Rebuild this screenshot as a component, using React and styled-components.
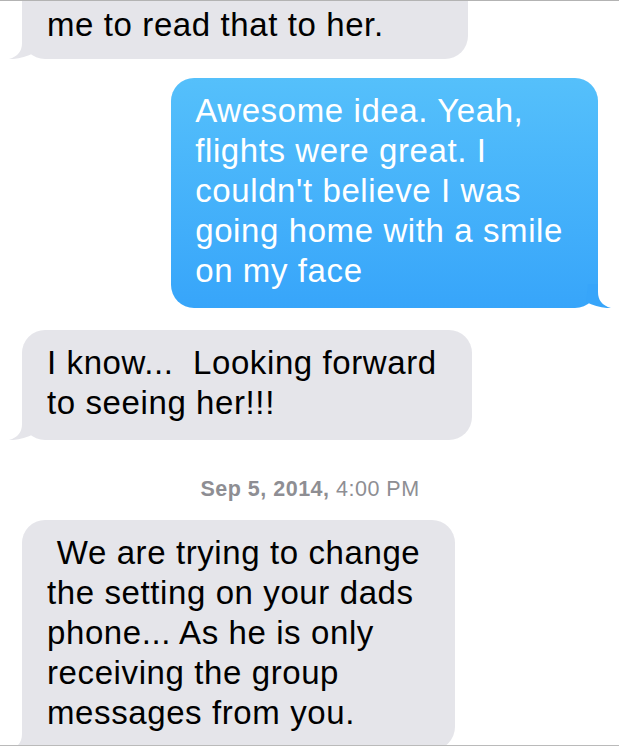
import React from "react";
import styled, { createGlobalStyle } from "styled-components";

const GlobalStyle = createGlobalStyle`
  html, body { margin: 0; padding: 0; background: #ffffff; }
  body { font-family: "Liberation Sans", Arial, Helvetica, sans-serif; }
`;

const Screen = styled.div`
  width: 619px;
  height: 746px;
  box-sizing: border-box;
  border-top: 1px solid #b3b3b3;
  border-bottom: 1px solid #bababa;
  overflow: hidden;
  display: flex;
  flex-direction: column;
  padding: 0 21px 0 22px;
`;

const Row = styled.div`
  display: flex;
  flex-shrink: 0;
  justify-content: ${(p) => (p.$from === "me" ? "flex-end" : "flex-start")};
  margin-top: ${(p) => p.$gap}px;
`;

const Bubble = styled.div`
  position: relative;
  box-sizing: border-box;
  width: ${(p) => (p.$width ? `${p.$width}px` : "auto")};
  padding: ${(p) => p.$padTop ?? 13}px 35px ${(p) => p.$padBottom ?? 17}px
    ${(p) => (p.$from === "me" ? 24 : 25)}px;
  border-radius: 23px;
  font-size: 33px;
  letter-spacing: 0.6px;
  line-height: 40px;
  color: ${(p) => (p.$from === "me" ? "#ffffff" : "#000000")};
  background: ${(p) =>
    p.$from === "me"
      ? "linear-gradient(180deg, #55c0fb 0%, #37a5fa 100%)"
      : "#e5e5ea"};
`;

const Line = styled.span`
  display: block;
  white-space: pre;
  position: relative;
  z-index: 1;
`;

const TailSvg = styled.svg`
  position: absolute;
  bottom: 0;
  width: 30px;
  height: 24px;
  ${(p) => (p.$from === "me" ? "right: -14px;" : "left: -14px; transform: scaleX(-1);")}
`;

const Stamp = styled.div`
  flex-shrink: 0;
  margin-top: 36px;
  text-align: center;
  font-size: 21.5px;
  letter-spacing: 0.5px;
  line-height: 26px;
  color: #8e8e93;
`;

const StampDay = styled.span`
  font-weight: bold;
`;

function Tail({ from }) {
  return (
    <TailSvg $from={from} viewBox="0 0 30 24" aria-hidden="true">
      <path
        d="M6 0 H16 V8 C16 16 20 21.5 29 24 C21 24.5 12 22 4 18 Z"
        fill={from === "me" ? "#37a5fa" : "#e5e5ea"}
      />
    </TailSvg>
  );
}

function Message({ from, lines, gap, width, padTop, padBottom }) {
  return (
    <Row $from={from} $gap={gap}>
      <Bubble $from={from} $width={width} $padTop={padTop} $padBottom={padBottom}>
        {lines.map((l, i) => (
          <Line key={i}>{l}</Line>
        ))}
        <Tail from={from} />
      </Bubble>
    </Row>
  );
}

export default function App() {
  return (
    <>
      <GlobalStyle />
      <Screen>
        <Message
          from="them"
          gap={-56}
          width={446}
          padTop={60}
          padBottom={14}
          lines={["me to read that to her."]}
        />
        <Message
          from="me"
          gap={19}
          lines={[
            "Awesome idea. Yeah,",
            "flights were great. I",
            "couldn't believe I was",
            "going home with a smile",
            "on my face",
          ]}
        />
        <Message
          from="them"
          gap={22}
          lines={["I know...  Looking forward", "to seeing her!!!"]}
        />
        <Stamp>
          <StampDay>Sep 5, 2014,</StampDay> 4:00 PM
        </Stamp>
        <Message
          from="them"
          gap={18}
          lines={[
            " We are trying to change",
            "the setting on your dads",
            "phone... As he is only",
            "receiving the group",
            "messages from you.",
          ]}
        />
      </Screen>
    </>
  );
}
